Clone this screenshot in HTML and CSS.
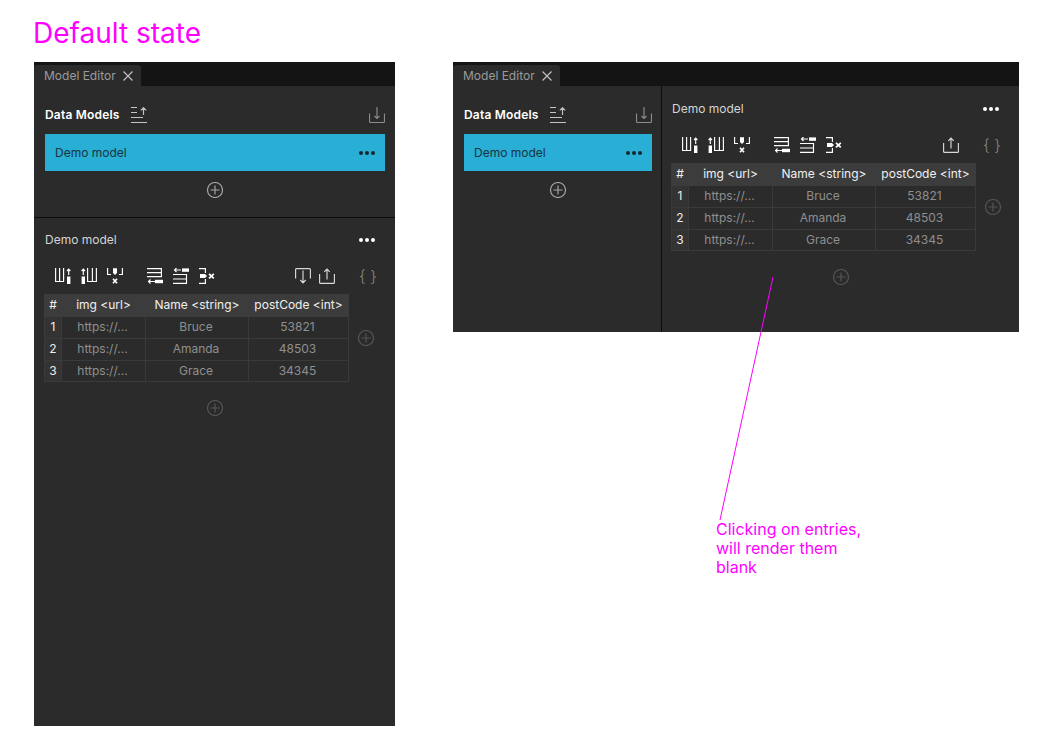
FILE: index.html
```html
<!DOCTYPE html>
<html lang="en">
<head>
<meta charset="utf-8">
<title>Default state</title>
<link rel="stylesheet" href="styles.css">
</head>
<body>
<svg class="defs" width="0" height="0" aria-hidden="true">
  <symbol id="i-col-right" viewBox="0 0 16 16">
    <path class="ln" d="M.6 0V13.500H9M4.600 0V13.500M8.600 0V13.500"/>
    <rect class="fl" x="12" y="8.500" width="3.400" height="7.500"/>
    <path class="ln" d="M13.700 7V1.200M12 3l1.700-1.800L15.400 3"/>
  </symbol>
  <symbol id="i-col-left" viewBox="0 0 16 16">
    <path class="ln" d="M15.400 0V13.500H6M11.400 0V13.500M6.600 0V13.500"/>
    <rect class="fl" x=".6" y="8.500" width="3.400" height="7.500"/>
    <path class="ln" d="M2.300 7V1.200M.6 3l1.700-1.800L4 3"/>
  </symbol>
  <symbol id="i-col-del" viewBox="0 0 16 16">
    <path class="ln" d="M.6 0V6.500H4M15.400 0V6.500H12"/>
    <path class="fl" d="M6 .3h4v4.700l-2 2l-2-2z"/>
    <path class="ln2" d="M6 10.800l4 4.500M10 10.800l-4 4.500"/>
  </symbol>
  <symbol id="i-row-below" viewBox="0 0 16 16">
    <path class="ln" d="M0 .6H14.400V8.600H0M0 4.600H14.400"/>
    <path class="ln" d="M1.500 13.500H8M3.500 11.500l-2 2l2 2"/>
    <rect class="fl" x="8" y="11.800" width="8" height="3.400"/>
  </symbol>
  <symbol id="i-row-above" viewBox="0 0 16 16">
    <rect class="fl" x="9" y=".4" width="7.500" height="3.400"/>
    <path class="ln" d="M1.500 2H8M3.500 0l-2 2l2 2"/>
    <path class="ln" d="M0 6.500H13.500V15.400H0M0 11H13.500"/>
  </symbol>
  <symbol id="i-row-del" viewBox="0 0 16 16">
    <path class="ln" d="M0 .6H6.400V5M0 15.400H6.400V11"/>
    <path class="fl" d="M1 6H6l2 2-2 2H1z"/>
    <path class="ln2" d="M10 5.800l4.800 4.600M14.800 5.800L10 10.400"/>
  </symbol>
  <symbol id="i-down" viewBox="0 0 16 16">
    <path class="ln" d="M.6 10.500V1.600Q.6 .6 1.600 .6H14.400Q15.400 .6 15.400 1.600V10.500M8 2.500V14.800M5.300 12L8 14.800l2.700-2.800"/>
  </symbol>
  <symbol id="i-up" viewBox="0 0 16 16">
    <path class="ln" d="M.6 6V14.400Q.6 15.400 1.600 15.400H14.400Q15.400 15.400 15.400 14.400V6M8 11.500V1M5.300 3.800L8 1l2.700 2.800"/>
  </symbol>
  <symbol id="i-sort" viewBox="0 0 17 16">
    <path class="ln" d="M0 .5H6M0 5.500H6M0 10.500H12M0 15.500H16M12.500 8V.7M9.800 3.400L12.500 .7l2.700 2.700"/>
  </symbol>
  <symbol id="i-import" viewBox="0 0 16 16">
    <path class="ln" d="M.5 6.500V14.500Q.5 15.500 1.500 15.500H14.500Q15.500 15.500 15.500 14.500V6.500M8 0V11.500M5.500 9L8 11.500l2.500-2.500"/>
  </symbol>
  <symbol id="i-plus" viewBox="0 0 16 16">
    <circle class="ln" cx="8" cy="8" r="7.500"/>
    <path class="ln" d="M8 3.500V12.500M3.500 8H12.500"/>
  </symbol>
  <symbol id="i-close" viewBox="0 0 10 10">
    <path class="ln" d="M.5 .5l9 9M9.500 .5l-9 9"/>
  </symbol>
  <symbol id="i-dots" viewBox="0 0 16 4">
    <circle class="fl" cx="2" cy="2" r="2"/>
    <circle class="fl" cx="8" cy="2" r="2"/>
    <circle class="fl" cx="14" cy="2" r="2"/>
  </symbol>
</svg>

<h1 class="heading">Default state</h1>

<main class="board">
  <section class="panel panel-tall">
    <div class="tabbar">
      <div class="tab"><span>Model Editor</span><svg class="ic-close"><use href="#i-close"/></svg></div>
    </div>
    <div class="models models-wide">
      <div class="models-head">
        <span class="models-title">Data Models</span>
        <svg class="ic-sort"><use href="#i-sort"/></svg>
        <svg class="ic ic-import"><use href="#i-import"/></svg>
      </div>
      <div class="model-item"><span>Demo model</span><svg class="ic-dots dark"><use href="#i-dots"/></svg></div>
      <svg class="ic ic-plus"><use href="#i-plus"/></svg>
    </div>
    <div class="detail">
      <div class="detail-head"><span class="detail-name">Demo model</span><svg class="ic-dots"><use href="#i-dots"/></svg></div>
      <div class="toolbar">
        <svg class="ic"><use href="#i-col-right"/></svg>
        <svg class="ic"><use href="#i-col-left"/></svg>
        <svg class="ic"><use href="#i-col-del"/></svg>
        <svg class="ic group-start"><use href="#i-row-below"/></svg>
        <svg class="ic"><use href="#i-row-above"/></svg>
        <svg class="ic"><use href="#i-row-del"/></svg>
        <svg class="ic soft push"><use href="#i-down"/></svg>
        <svg class="ic soft tight"><use href="#i-up"/></svg>
        <span class="braces">{ }</span>
      </div>
      <div class="table-row">
        <table class="grid">
          <colgroup><col class="c-n"><col class="c-img"><col class="c-name"><col class="c-post"></colgroup>
          <thead><tr><th>#</th><th>img &lt;url&gt;</th><th>Name &lt;string&gt;</th><th>postCode &lt;int&gt;</th></tr></thead>
          <tbody>
            <tr><th>1</th><td>https://...</td><td>Bruce</td><td>53821</td></tr>
            <tr><th>2</th><td>https://...</td><td>Amanda</td><td>48503</td></tr>
            <tr class="row-last"><th>3</th><td>https://...</td><td>Grace</td><td>34345</td></tr>
          </tbody>
        </table>
        <svg class="ic ic-add-col"><use href="#i-plus"/></svg>
      </div>
      <svg class="ic ic-add-row"><use href="#i-plus"/></svg>
    </div>
  </section>

  <section class="panel panel-short">
    <div class="tabbar">
      <div class="tab"><span>Model Editor</span><svg class="ic-close"><use href="#i-close"/></svg></div>
    </div>
    <div class="split">
      <div class="models models-side">
        <div class="models-head">
          <span class="models-title">Data Models</span>
          <svg class="ic-sort"><use href="#i-sort"/></svg>
          <svg class="ic ic-import"><use href="#i-import"/></svg>
        </div>
        <div class="model-item"><span>Demo model</span><svg class="ic-dots dark"><use href="#i-dots"/></svg></div>
        <svg class="ic ic-plus"><use href="#i-plus"/></svg>
      </div>
      <div class="detail detail-side">
        <div class="detail-head"><span class="detail-name">Demo model</span><svg class="ic-dots"><use href="#i-dots"/></svg></div>
        <div class="toolbar">
          <svg class="ic"><use href="#i-col-right"/></svg>
          <svg class="ic"><use href="#i-col-left"/></svg>
          <svg class="ic"><use href="#i-col-del"/></svg>
          <svg class="ic group-start"><use href="#i-row-below"/></svg>
          <svg class="ic"><use href="#i-row-above"/></svg>
          <svg class="ic"><use href="#i-row-del"/></svg>
          <svg class="ic soft push"><use href="#i-up"/></svg>
          <span class="braces">{ }</span>
        </div>
        <div class="table-row">
          <table class="grid">
            <colgroup><col class="c-n"><col class="c-img"><col class="c-name"><col class="c-post"></colgroup>
            <thead><tr><th>#</th><th>img &lt;url&gt;</th><th>Name &lt;string&gt;</th><th>postCode &lt;int&gt;</th></tr></thead>
            <tbody>
              <tr><th>1</th><td>https://...</td><td>Bruce</td><td>53821</td></tr>
              <tr><th>2</th><td>https://...</td><td>Amanda</td><td>48503</td></tr>
              <tr class="row-last"><th>3</th><td>https://...</td><td>Grace</td><td>34345</td></tr>
            </tbody>
          </table>
          <svg class="ic ic-add-col"><use href="#i-plus"/></svg>
        </div>
        <svg class="ic ic-add-row"><use href="#i-plus"/></svg>
      </div>
    </div>
  </section>
</main>

<svg class="leader" width="1052" height="742" aria-hidden="true"><line x1="773" y1="277" x2="720" y2="520"/></svg>
<p class="note">Clicking on entries,<br>will render them<br>blank</p>
</body>
</html>
```

FILE: styles.css
```css
* { box-sizing: border-box; }

html, body { margin: 0; padding: 0; }

body {
  position: relative;
  width: 1052px;
  height: 742px;
  overflow: hidden;
  background: #fff;
  font-family: Inter, "Liberation Sans", sans-serif;
}

.defs { position: absolute; }

.ln { fill: none; stroke: currentColor; stroke-width: 1.15; }
.ln2 { fill: none; stroke: currentColor; stroke-width: 1.7; }
.fl { fill: currentColor; stroke: none; }

.heading {
  margin: 0;
  padding: 15px 0 0 33px;
  height: 62px;
  font-size: 28px;
  line-height: 36px;
  font-weight: 400;
  color: #ff00ff;
}

.board {
  display: flex;
  align-items: flex-start;
  gap: 58px;
  padding-left: 34px;
}

.panel {
  display: flex;
  flex-direction: column;
  background: #2b2b2b;
  color: #fff;
  font-size: 12px;
}
.panel-tall { width: 361px; height: 664px; }
.panel-short { width: 566px; height: 270px; }

.tabbar {
  flex: none;
  height: 24px;
  display: flex;
  align-items: flex-end;
  background: #141414;
}

.tab {
  display: flex;
  align-items: center;
  justify-content: space-between;
  width: 107px;
  height: 21px;
  padding: 0 8px 0 10px;
  background: #2b2b2b;
  border-radius: 3px 3px 0 0;
  color: #9b9b9b;
  line-height: 21px;
}

.ic-close { width: 10px; height: 10px; color: #c0c0c0; }

.models {
  display: flex;
  flex-direction: column;
  padding: 17px 10px 0 11px;
}
.models-wide {
  flex: none;
  height: 132px;
  border-bottom: 1px solid #0c0c0c;
}
.models-side {
  flex: none;
  width: 209px;
  padding-right: 9px;
  border-right: 1px solid #0c0c0c;
}

.models-head {
  display: flex;
  align-items: center;
  height: 24px;
  margin-bottom: 7px;
}
.models-title {
  font-weight: 600;
  letter-spacing: .2px;
  margin-right: 11px;
  padding-bottom: 2px;
}

.ic { flex: none; width: 16px; height: 16px; }
.ic-sort { flex: none; width: 17px; height: 16px; color: #c4c4c4; }
.ic-import { margin-left: auto; color: #8c8c8c; }

.model-item {
  display: flex;
  align-items: center;
  justify-content: space-between;
  height: 37px;
  padding: 0 10px;
  background: #29aed5;
  color: #18343f;
}

.ic-dots { flex: none; width: 16px; height: 4px; color: #fff; }
.ic-dots.dark { color: #16282f; }

.ic-plus {
  align-self: center;
  margin-top: 11px;
  color: #a6a6a6;
}

.detail {
  flex: 1;
  display: flex;
  flex-direction: column;
  padding: 14px 20px 0 10px;
  min-width: 0;
}
.detail-side { padding-top: 15px; }

.detail-head {
  display: flex;
  align-items: center;
  justify-content: space-between;
  height: 16px;
  padding-left: 1px;
  color: #d4d4d4;
}
.detail-side .detail-head { padding-left: 0; }
.detail-name { padding-bottom: 2px; }

.toolbar {
  display: flex;
  align-items: center;
  gap: 10px;
  height: 16px;
  margin-top: 20px;
  padding-left: 11px;
  color: #fff;
}
.detail-side .toolbar { padding-left: 10px; }

.group-start { margin-left: 14px; }
.soft { color: #d8d8d8; }
.push { margin-left: auto; }
.tight { margin-left: -2px; }

.braces {
  flex: none;
  width: 16px;
  margin-left: 14px;
  font-size: 16px;
  font-weight: 300;
  line-height: 16px;
  text-align: center;
  white-space: nowrap;
  color: #858585;
}

.table-row {
  display: flex;
  align-items: center;
  margin-top: 10px;
}
.detail-side .table-row { margin-left: -1px; }

.grid {
  flex: none;
  width: 304px;
  table-layout: fixed;
  border-collapse: collapse;
  border: 1px solid #3a3a3a;
  font-size: 12px;
  text-align: center;
}
.c-n { width: 17px; }
.c-img { width: 84px; }
.c-name { width: 103px; }
.c-post { width: 100px; }

.grid tr { height: 22px; }
.grid tr.row-last { height: 21px; }
.grid th, .grid td {
  padding: 0 0 2px;
  border: 1px solid #3a3a3a;
  line-height: 14px;
  white-space: nowrap;
  font-weight: 400;
}
.grid thead th {
  background: #3c3c3c;
  color: #f0f0f0;
  border-color: #3c3c3c;
}
.grid tbody th { background: #333; color: #eee; }
.grid td { color: #8f8f8f; padding-right: 2px; }
.grid .row-last th, .grid .row-last td { padding-bottom: 0; }

.ic-add-col { margin-left: 9px; color: #555; }
.ic-add-row {
  align-self: center;
  margin-top: 18px;
  margin-left: 20px;
  margin-right: 10px;
  color: #555;
}

.split { flex: 1; display: flex; min-height: 0; }

.leader { position: absolute; left: 0; top: 0; pointer-events: none; }
.leader line { stroke: #ff00ff; stroke-width: 1; }

.note {
  position: absolute;
  left: 716px;
  top: 520px;
  margin: 0;
  font-size: 16px;
  line-height: 19px;
  color: #ff00ff;
}
```
